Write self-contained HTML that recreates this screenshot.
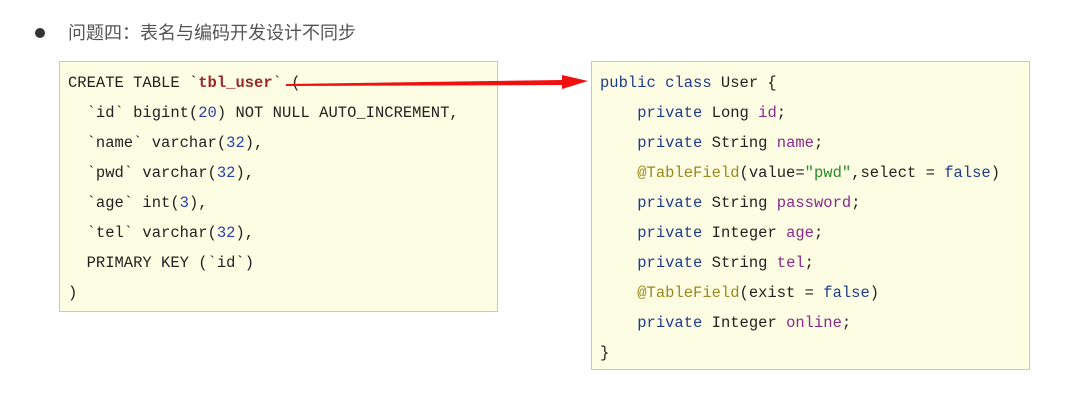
<!DOCTYPE html>
<html><head><meta charset="utf-8"><style>
body{margin:0;width:1079px;height:413px;background:#fff;position:relative;overflow:hidden;font-family:"Liberation Sans","Noto Sans CJK SC",sans-serif}
.title{position:absolute;left:68px;top:19px;font-size:18px;color:#555}
.dot{position:absolute;left:35px;top:28px;width:10px;height:10px;border-radius:50%;background:#333}
.box{position:absolute;background:#fdfde3;border:1px solid #c8c8c0;font-family:"Liberation Mono",monospace;font-size:15.5px;color:#222}
.box div{height:30px;line-height:30px;white-space:pre}
.k{color:#1f3c8a}.n{color:#2640b0}.s{color:#9a2a2a;font-weight:bold}.f{color:#8a2a8a}.a{color:#9a8a20}.g{color:#2a8a2a}
</style></head><body>
<div class="dot"></div>
<div class="title">问题四：表名与编码开发设计不同步</div>
<div class="box" style="left:59px;top:61px;width:429px;height:243px;padding:6px 0 0 8px"><div>CREATE TABLE `<span class="s">tbl_user</span>` (</div><div>  `id` bigint(<span class="n">20</span>) NOT NULL AUTO_INCREMENT,</div><div>  `name` varchar(<span class="n">32</span>),</div><div>  `pwd` varchar(<span class="n">32</span>),</div><div>  `age` int(<span class="n">3</span>),</div><div>  `tel` varchar(<span class="n">32</span>),</div><div>  PRIMARY KEY (`id`)</div><div>)</div></div>
<div class="box" style="left:591px;top:61px;width:429px;height:301px;padding:6px 0 0 8px"><div><span class="k">public class</span> User {</div><div>    <span class="k">private</span> Long <span class="f">id</span>;</div><div>    <span class="k">private</span> String <span class="f">name</span>;</div><div>    <span class="a">@TableField</span>(value=<span class="g">"pwd"</span>,select = <span class="k">false</span>)</div><div>    <span class="k">private</span> String <span class="f">password</span>;</div><div>    <span class="k">private</span> Integer <span class="f">age</span>;</div><div>    <span class="k">private</span> String <span class="f">tel</span>;</div><div>    <span class="a">@TableField</span>(exist = <span class="k">false</span>)</div><div>    <span class="k">private</span> Integer <span class="f">online</span>;</div><div>}</div></div>
<svg style="position:absolute;left:0;top:0" width="1079" height="413">
<path d="M286 84 L562 80 L562 75 L588 81 L562 89 L562 85 L286 86 Z" fill="#f01010"/>
</svg>
</body></html>
